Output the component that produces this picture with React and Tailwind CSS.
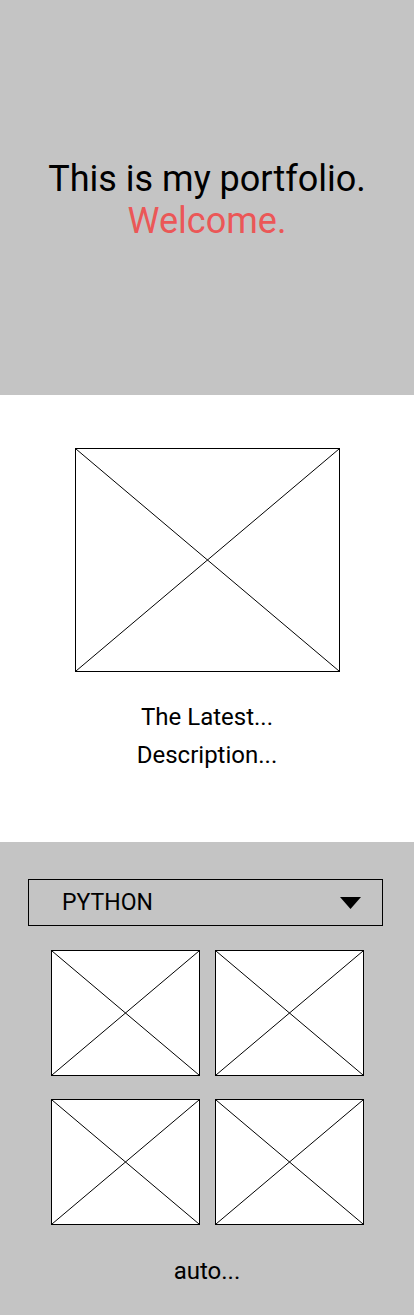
function Placeholder({ className }) {
  return (
    <div className={`relative border border-black bg-white ${className}`}>
      <svg className="absolute inset-0 h-full w-full" viewBox="0 0 100 100" preserveAspectRatio="none">
        <line x1="0" y1="0" x2="100" y2="100" stroke="#000" strokeWidth="1" vectorEffect="non-scaling-stroke" />
        <line x1="100" y1="0" x2="0" y2="100" stroke="#000" strokeWidth="1" vectorEffect="non-scaling-stroke" />
      </svg>
    </div>
  );
}

export default function App() {
  return (
    <div className="w-[414px] font-['Roboto',sans-serif] text-black">
      <section className="flex h-[395px] flex-col items-center justify-center bg-[#c4c4c4] pt-[4px] text-[36px] leading-[42px]">
        <p>This is my portfolio.</p>
        <p className="text-[#eb5757]">Welcome.</p>
      </section>

      <section className="flex h-[447px] flex-col items-center bg-white pt-[53px]">
        <Placeholder className="h-[224px] w-[265px]" />
        <div className="mt-[31px] flex flex-col items-center gap-[10px] text-[24px] leading-[28px]">
          <p>The Latest...</p>
          <p>Description...</p>
        </div>
      </section>

      <section className="flex h-[473px] flex-col bg-[#c4c4c4] px-[28px] pt-[37px]">
        <div className="flex h-[47px] w-[355px] items-center justify-between border border-black pl-[33px] pr-[21px]">
          <span className="text-[23px] leading-none">PYTHON</span>
          <svg width="21" height="12" viewBox="0 0 21 12">
            <path d="M0 0 H21 L10.5 12 Z" fill="#000" />
          </svg>
        </div>
        <div className="mt-[24px] grid grid-cols-[149px_149px] justify-center gap-x-[15px] gap-y-[23px]">
          <Placeholder className="h-[126px]" />
          <Placeholder className="h-[126px]" />
          <Placeholder className="h-[126px]" />
          <Placeholder className="h-[126px]" />
        </div>
        <p className="mt-[32px] text-center text-[24px] leading-[28px]">auto...</p>
      </section>
    </div>
  );
}
